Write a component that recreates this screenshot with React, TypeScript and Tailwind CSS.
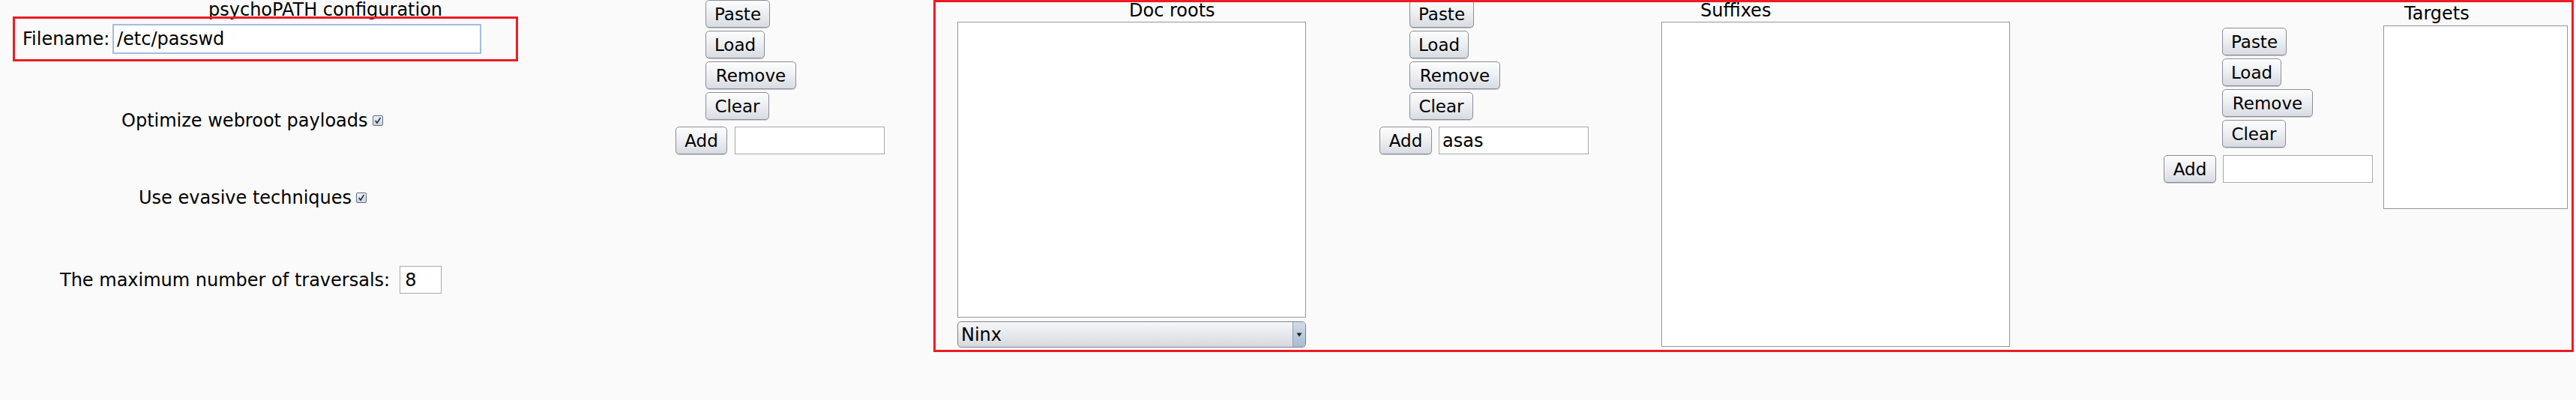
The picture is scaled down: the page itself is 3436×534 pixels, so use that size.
import React from "react";

type BtnProps = { label: string; className: string };

// Swing-style push button, fixed widths to line up with the capture
function Btn({ label, className }: BtnProps) {
  return (
    <button
      type="button"
      className={
        "h-[37px] shrink-0 rounded-[5px] border border-[#8a8e96] bg-linear-to-b from-[#fdfdfd] via-[#eceef2] to-[#d8dbe1] text-[23px] leading-[28px] text-black text-center shadow-[0_1px_0_#c4c7cd] " +
        className
      }
    >
      {label}
    </button>
  );
}

function CheckBox() {
  return (
    <span className="w-[14px] h-[14px] shrink-0 rounded-[2px] border border-[#5f6f84] bg-linear-to-b from-[#eef2f7] to-[#c9d3df] flex items-center justify-center">
      <svg width="10" height="10" viewBox="0 0 9 9">
        <path d="M1.5 4.5 L3.6 7.3 L7.6 1" fill="none" stroke="#1d2530" strokeWidth="1.4" />
      </svg>
    </span>
  );
}

function TextBox({ value, className }: { value?: string; className: string }) {
  return (
    <div
      className={
        "h-[37px] shrink-0 border border-[#a9a9ab] bg-white pl-[4px] flex items-center text-[24px] leading-[28px] " +
        className
      }
    >
      {value}
    </div>
  );
}

function ListButtons({ offset }: { offset: string }) {
  return (
    <div className={"flex flex-col items-start gap-[4px] " + offset}>
      <Btn label="Paste" className="w-[86px]" />
      <Btn label="Load" className="w-[79px]" />
      <Btn label="Remove" className="w-[121px]" />
      <Btn label="Clear" className="w-[85px]" />
    </div>
  );
}

export default function App() {
  return (
    <div className="relative w-[3436px] h-[534px] overflow-hidden bg-[#fafafa] text-black text-[24px] font-['DejaVu_Sans',sans-serif] flex items-start">
      {/* left options panel */}
      <div className="w-[700px] shrink-0 flex flex-col">
        <div className="h-[22px] leading-[26px] pl-[278px] whitespace-nowrap">
          psychoPATH configuration
        </div>
        <div className="h-[60px] flex items-center pl-[30px]">
          <span className="w-[120px] shrink-0 leading-[28px]">Filename:</span>
          <div className="w-[492px] h-[40px] border-2 border-[#a4bcdb] bg-white pl-[4px] flex items-center leading-[28px]">
            /etc/passwd
          </div>
        </div>
        <div className="mt-[65px] h-[28px] flex items-center pl-[162px] gap-[6px] whitespace-nowrap">
          <span className="leading-[28px]">Optimize webroot payloads</span>
          <CheckBox />
        </div>
        <div className="mt-[75px] h-[28px] flex items-center pl-[185px] gap-[6px] whitespace-nowrap">
          <span className="leading-[28px]">Use evasive techniques</span>
          <CheckBox />
        </div>
        <div className="mt-[77px] h-[37px] flex items-center pl-[80px] gap-[13px] whitespace-nowrap">
          <span className="leading-[28px]">The maximum number of traversals:</span>
          <TextBox value="8" className="w-[56px] pl-[6px]" />
        </div>
      </div>

      {/* doc roots controls */}
      <div className="ml-[201px] w-[279px] shrink-0 flex flex-col">
        <ListButtons offset="pl-[40px]" />
        <div className="mt-[9px] flex gap-[10px]">
          <Btn label="Add" className="w-[69px]" />
          <TextBox className="w-[200px]" />
        </div>
      </div>

      {/* doc roots list */}
      <div className="ml-[97px] w-[465px] shrink-0 flex flex-col">
        <div className="h-[29px] leading-[28px] pl-[229px] whitespace-nowrap">Doc roots</div>
        <div className="h-[395px] border border-[#9496a0] bg-white" />
        <div className="mt-[5px] h-[35px] rounded-[5px] border border-[#80848d] bg-linear-to-b from-[#f6f7f9] via-[#e6e8ec] to-[#d5d9df] flex items-center overflow-hidden">
          <span className="flex-1 pl-[4px] leading-[28px]">Ninx</span>
          <span className="w-[17px] h-full border-l border-[#8f9db0] bg-linear-to-b from-[#d2dce8] to-[#a9bbd1] flex items-center justify-center">
            <svg width="8" height="6" viewBox="0 0 8 6">
              <path d="M0.5 0.5 H7.5 L4 5.5 Z" fill="#1b1f26" />
            </svg>
          </span>
        </div>
      </div>

      {/* suffixes controls */}
      <div className="ml-[98px] w-[279px] shrink-0 flex flex-col">
        <ListButtons offset="pl-[40px]" />
        <div className="mt-[9px] flex gap-[9px]">
          <Btn label="Add" className="w-[70px]" />
          <TextBox value="asas" className="w-[200px]" />
        </div>
      </div>

      {/* suffixes list */}
      <div className="ml-[97px] w-[465px] shrink-0 flex flex-col">
        <div className="h-[29px] leading-[28px] pl-[52px] whitespace-nowrap">Suffixes</div>
        <div className="h-[434px] border border-[#9496a0] bg-white" />
      </div>

      {/* targets controls */}
      <div className="ml-[205px] w-[279px] shrink-0 flex flex-col pt-[37px]">
        <ListButtons offset="pl-[78px]" />
        <div className="mt-[10px] flex gap-[9px]">
          <Btn label="Add" className="w-[70px]" />
          <TextBox className="w-[200px]" />
        </div>
      </div>

      {/* targets list */}
      <div className="ml-[14px] w-[246px] shrink-0 flex flex-col">
        <div className="h-[34px] pt-[4px] leading-[28px] pl-[28px] whitespace-nowrap">Targets</div>
        <div className="h-[245px] border border-[#9496a0] bg-white" />
      </div>

      {/* red highlight annotations drawn over the capture */}
      <div className="pointer-events-none absolute left-[17px] top-[22px] w-[674px] h-[60px] border-[3px] border-[#ed1c24]" />
      <div className="pointer-events-none absolute left-[1245px] top-0 w-[2188px] h-[470px] border-[3px] border-[#ed1c24]" />
    </div>
  );
}
